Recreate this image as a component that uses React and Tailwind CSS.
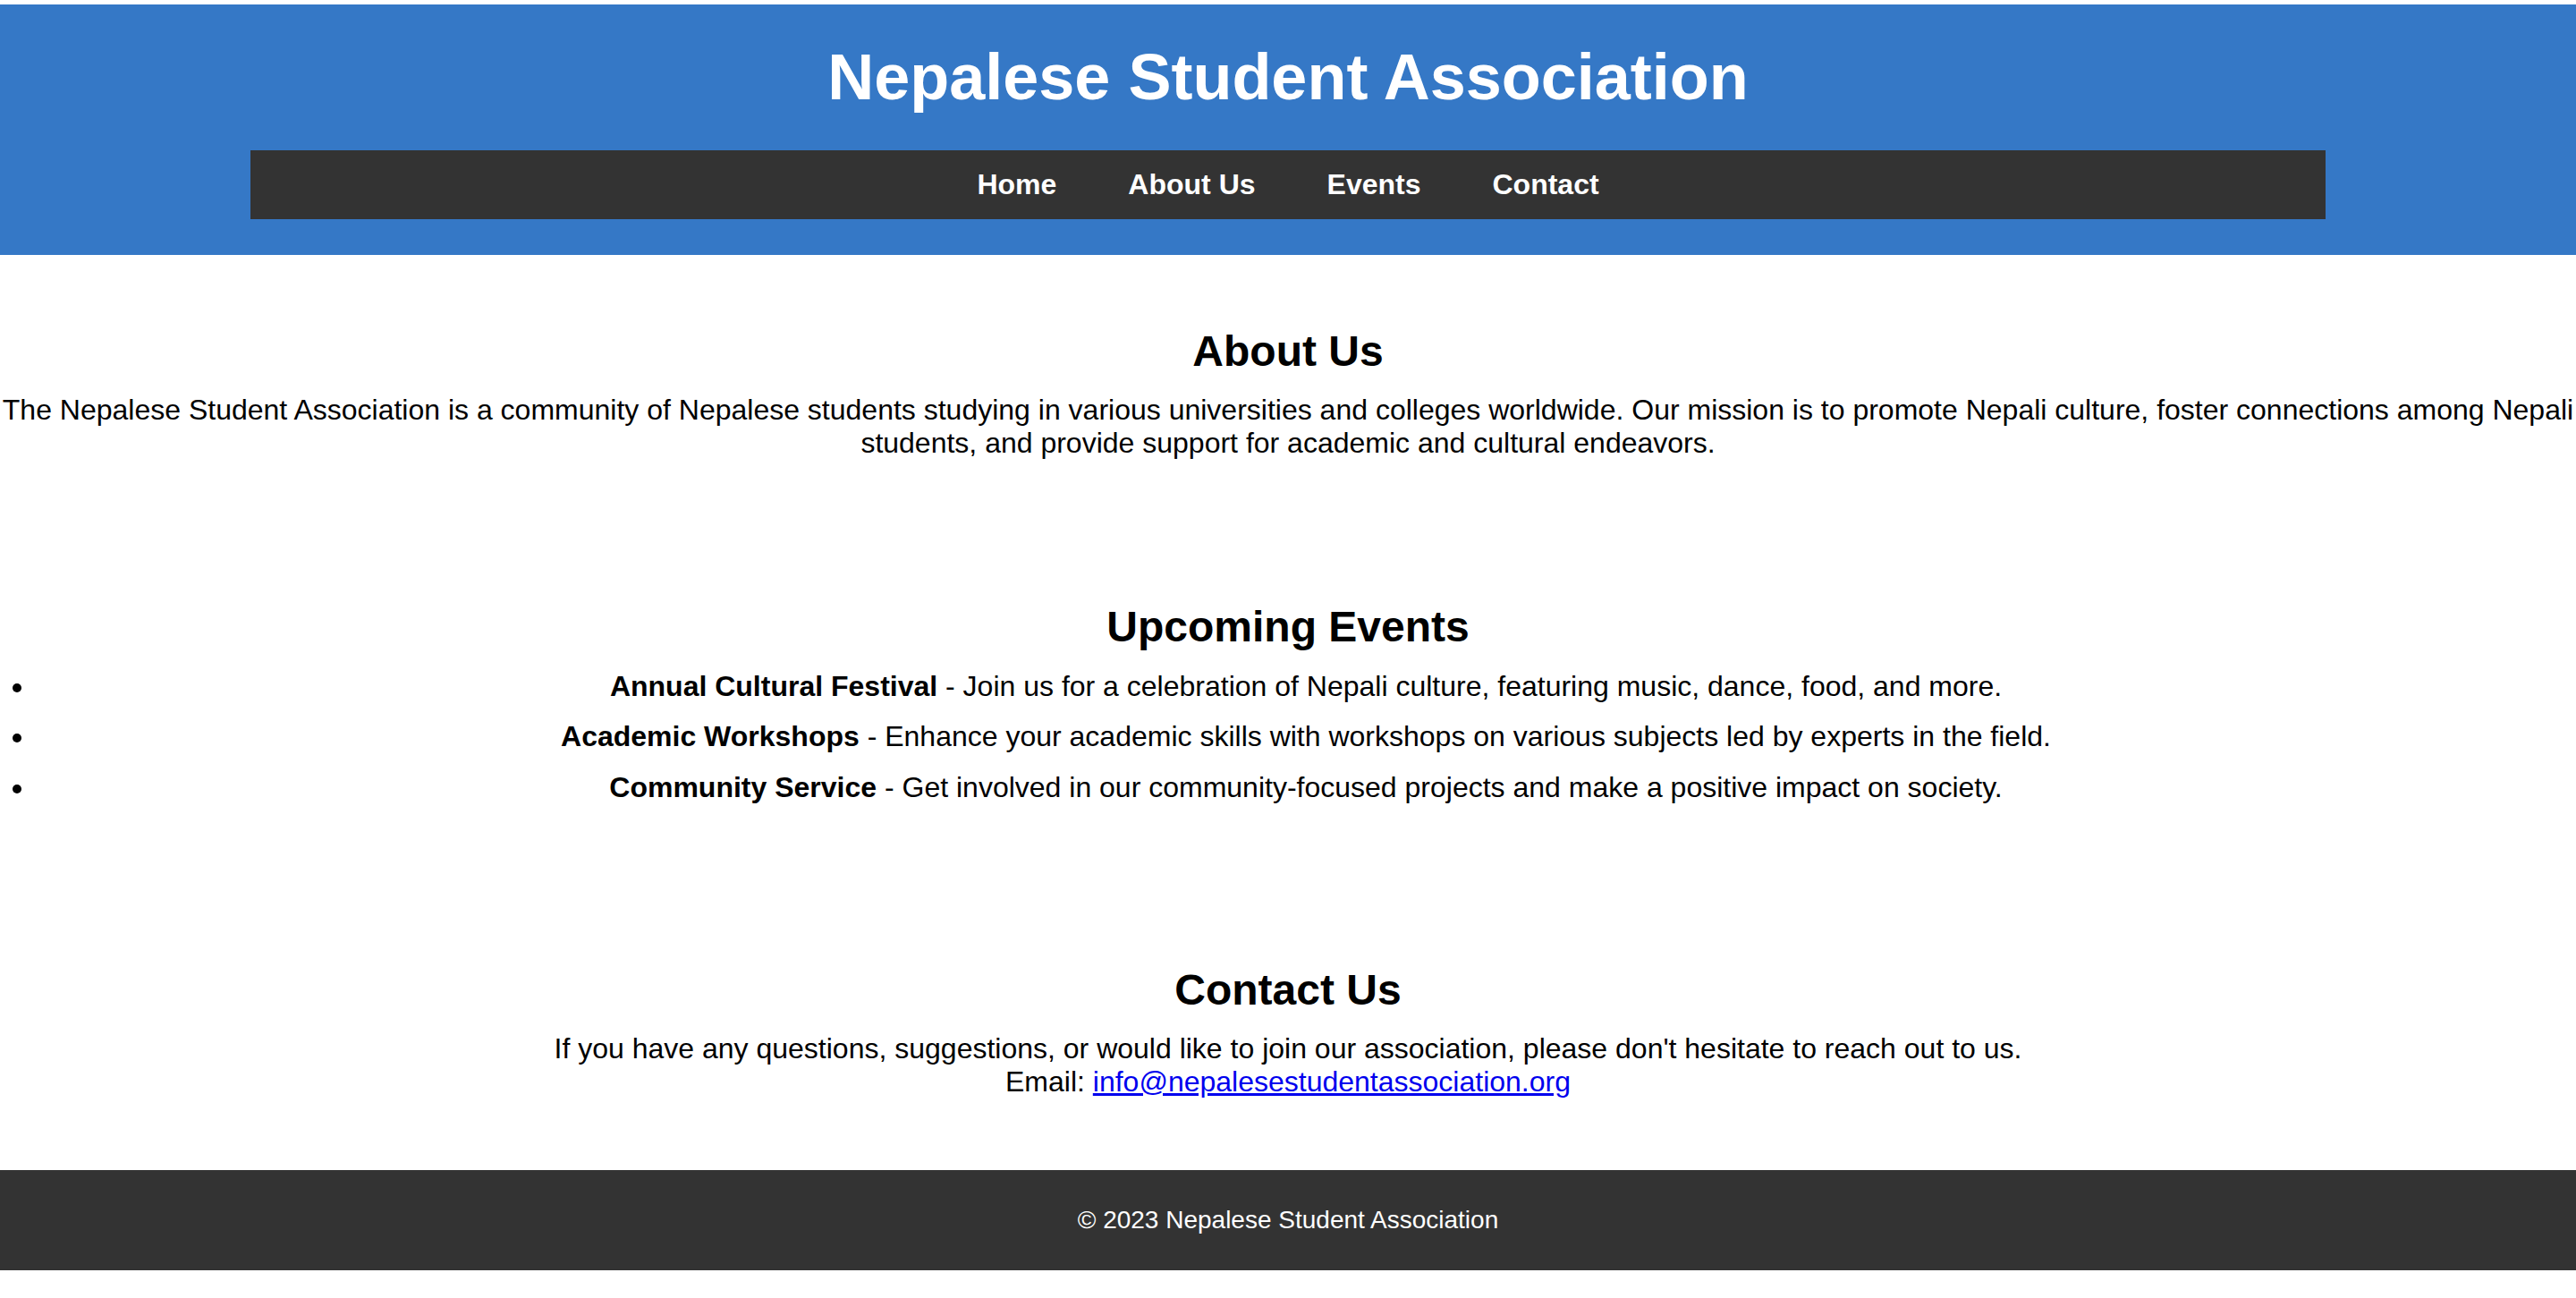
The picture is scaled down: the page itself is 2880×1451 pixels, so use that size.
const NAV = ['Home', 'About Us', 'Events', 'Contact']

const EVENTS = [
  { title: 'Annual Cultural Festival', text: 'Join us for a celebration of Nepali culture, featuring music, dance, food, and more.' },
  { title: 'Academic Workshops', text: 'Enhance your academic skills with workshops on various subjects led by experts in the field.' },
  { title: 'Community Service', text: 'Get involved in our community-focused projects and make a positive impact on society.' },
]

export default function App() {
  return (
    <div className="min-h-screen bg-white pt-[5px] text-black font-['Liberation_Sans',Arial,sans-serif] text-[32px] leading-[1.15]">
      <header className="bg-[#3578c6] py-[40px] text-center">
        <h1 className="text-[72px] font-bold leading-[1.15] text-white">Nepalese Student Association</h1>
        <nav className="mx-[280px] mt-[40px] bg-[#333333] py-[20px]">
          <ul className="flex justify-center gap-[80px]">
            {NAV.map(item => (
              <li key={item}>
                <a href="#" className="font-bold text-white">{item}</a>
              </li>
            ))}
          </ul>
        </nav>
      </header>

      <section className="py-[80px] text-center">
        <h2 className="mb-[20px] text-[48px] font-bold leading-[1.15]">About Us</h2>
        <p>
          The Nepalese Student Association is a community of Nepalese students studying in various universities and colleges worldwide. Our mission is to promote Nepali culture, foster connections among Nepali students, and provide support for academic and cultural endeavors.
        </p>
      </section>

      <section className="py-[80px] text-center">
        <h2 className="mb-[20px] text-[48px] font-bold leading-[1.15]">Upcoming Events</h2>
        <ul className="list-disc pl-[40px]">
          {EVENTS.map(ev => (
            <li key={ev.title} className="mb-[20px]">
              <strong className="font-bold">{ev.title}</strong> - {ev.text}
            </li>
          ))}
        </ul>
      </section>

      <section className="py-[80px] text-center">
        <h2 className="mb-[20px] text-[48px] font-bold leading-[1.15]">Contact Us</h2>
        <p>
          If you have any questions, suggestions, or would like to join our association, please don't hesitate to reach out to us.
          <br />
          Email: <a href="mailto:info@nepalesestudentassociation.org" className="text-[#0000ee] underline">info@nepalesestudentassociation.org</a>
        </p>
      </section>

      <footer className="bg-[#333333] py-[40px] text-center text-[28px] leading-[1.15] text-white">
        <p>© 2023 Nepalese Student Association</p>
      </footer>
    </div>
  )
}
